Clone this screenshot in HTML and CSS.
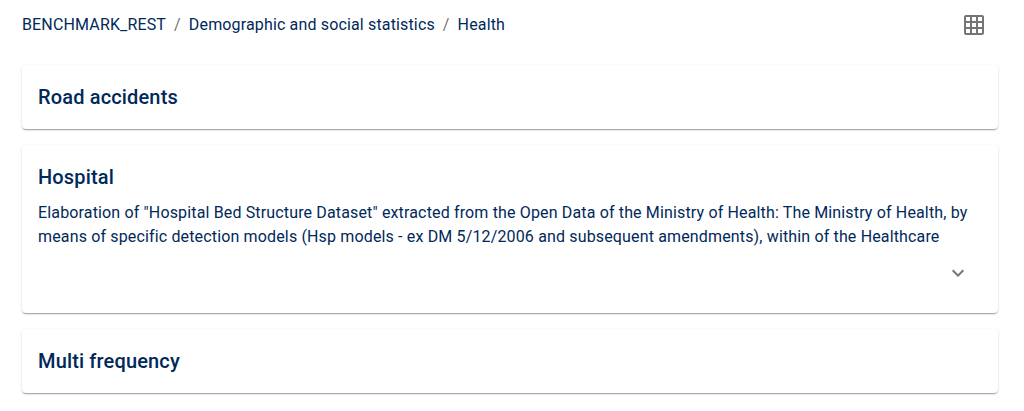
FILE: index.html
```
<!DOCTYPE html>
<html lang="en">
<head>
<meta charset="utf-8">
<title>Health</title>
<link rel="stylesheet" href="styles.css">
</head>
<body>
<header class="topbar">
<nav aria-label="Breadcrumb">
<ol class="breadcrumb">
<li><a href="#">BENCHMARK_REST</a></li>
<li><a href="#">Demographic and social statistics</a></li>
<li><a href="#" aria-current="page">Health</a></li>
</ol>
</nav>
<button class="icon-button" type="button" aria-label="Grid view">
<svg viewBox="0 0 24 24" width="24" height="24"><path d="M20 2H4c-1.100 0-2 .9-2 2v16c0 1.100.9 2 2 2h16c1.100 0 2-.9 2-2V4c0-1.100-.9-2-2-2zM8 20H4v-4h4v4zm0-6H4v-4h4v4zm0-6H4V4h4v4zm6 12h-4v-4h4v4zm0-6h-4v-4h4v4zm0-6h-4V4h4v4zm6 12h-4v-4h4v4zm0-6h-4v-4h4v4zm0-6h-4V4h4v4z"/></svg>
</button>
</header>
<main class="cards">
<article class="card"><h2 class="card-title">Road accidents</h2></article>
<article class="card">
<h2 class="card-title">Hospital</h2>
<p class="card-text">Elaboration of "Hospital Bed Structure Dataset" extracted from the Open Data of the Ministry of Health: The Ministry of Health, by means of specific detection models (Hsp models - ex DM 5/12/2006 and subsequent amendments), within of the Healthcare</p>
<div class="card-actions">
<button class="icon-button" type="button" aria-label="Show more">
<svg viewBox="0 0 24 24" width="24" height="24"><path d="M16.590 8.590L12 13.170 7.410 8.590 6 10l6 6 6-6z"/></svg>
</button>
</div>
</article>
<article class="card"><h2 class="card-title">Multi frequency</h2></article>
</main>
</body>
</html>
```
FILE: styles.css
```
* { box-sizing: border-box; }
body {
  margin: 0;
  padding: 0 26px 16px 22px;
  background: #fff;
  color: #00295a;
  font: 400 16px/24px Roboto, sans-serif;
  letter-spacing: 0.15px;
}
a { color: inherit; text-decoration: none; }
.topbar {
  display: flex;
  align-items: center;
  justify-content: space-between;
  height: 49px;
  margin-bottom: 16px;
}
.breadcrumb {
  display: flex;
  flex-wrap: wrap;
  margin: 0;
  padding: 0;
  list-style: none;
}
.breadcrumb li + li::before {
  content: "/";
  margin: 0 8px;
  color: rgba(0, 0, 0, 0.6);
}
.icon-button {
  display: flex;
  padding: 12px;
  border: 0;
  border-radius: 50%;
  background: none;
  color: #757575;
  cursor: pointer;
}
.icon-button svg { fill: currentColor; }
.cards {
  display: flex;
  flex-direction: column;
  gap: 16px;
}
.card {
  padding: 16px;
  border-radius: 4px;
  background: #fff;
  box-shadow: 0 2px 1px -1px rgba(0,0,0,.2), 0 1px 1px 0 rgba(0,0,0,.14), 0 1px 3px 0 rgba(0,0,0,.12);
}
.card-title {
  margin: 0;
  font-size: 20px;
  font-weight: 500;
  line-height: 32px;
}
.card-text { margin: 8px 0 0; }
.card-actions {
  display: flex;
  justify-content: flex-end;
}
```
